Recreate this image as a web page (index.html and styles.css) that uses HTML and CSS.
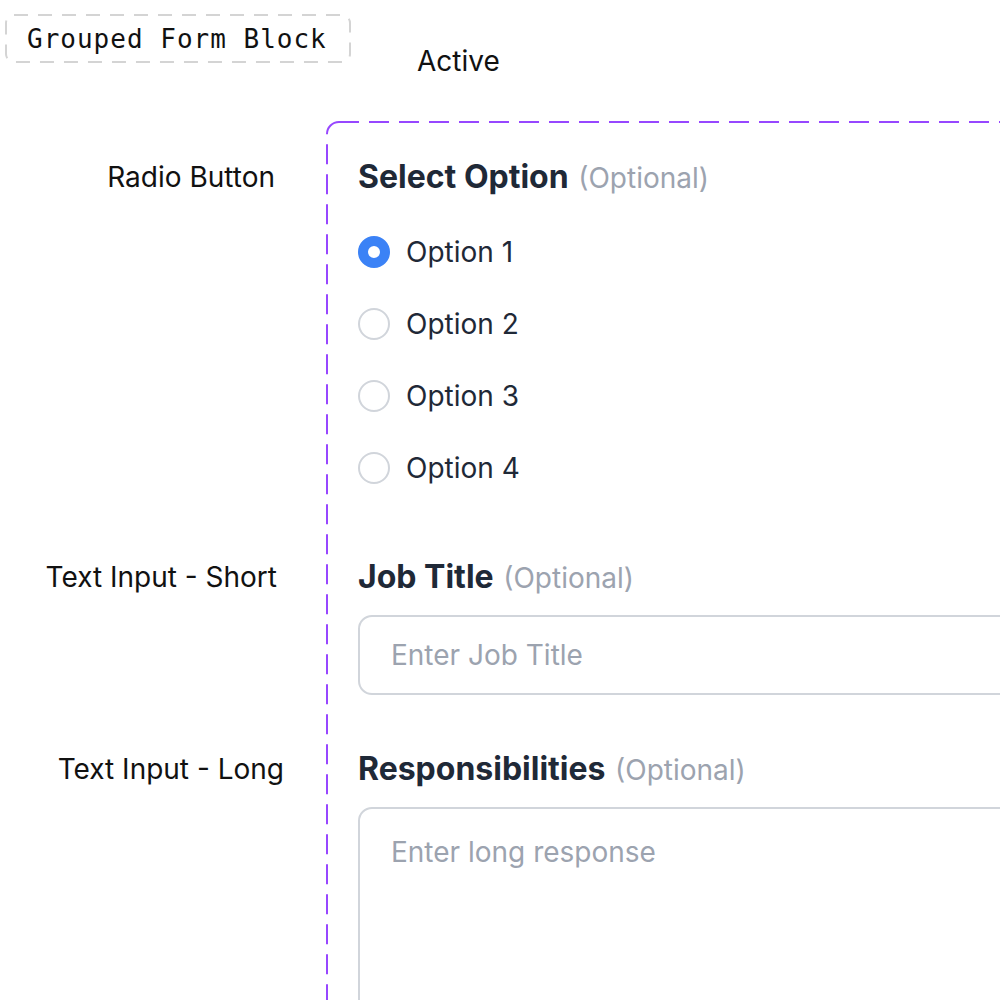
FILE: index.html
```html
<!DOCTYPE html>
<html lang="en">
<head>
    <meta charset="UTF-8">
    <meta name="viewport" content="width=device-width, initial-scale=1.0">
    <title>Grouped Form Block</title>
    <link rel="stylesheet" href="styles.css">
</head>
<body>
    <div class="page">
        <header class="header">
            <div class="tag">Grouped Form Block</div>
            <div class="state">Active</div>
        </header>

        <div class="form-grid">
            <div class="frame"></div>

            <!-- Radio group -->
            <div class="row-label row-first">Radio Button</div>
            <div class="field row-first">
                <h2 class="field-title">Select Option <span class="optional">(Optional)</span></h2>
                <div class="options">
                    <label class="option"><input type="radio" name="opt" checked> Option 1</label>
                    <label class="option"><input type="radio" name="opt"> Option 2</label>
                    <label class="option"><input type="radio" name="opt"> Option 3</label>
                    <label class="option"><input type="radio" name="opt"> Option 4</label>
                </div>
            </div>

            <!-- Short text -->
            <div class="row-label row-short label-short">Text Input - Short</div>
            <div class="field row-short">
                <h2 class="field-title">Job Title <span class="optional">(Optional)</span></h2>
                <input class="text-input" type="text" placeholder="Enter Job Title">
            </div>

            <!-- Long text -->
            <div class="row-label row-long label-long">Text Input - Long</div>
            <div class="field row-long">
                <h2 class="field-title">Responsibilities <span class="optional">(Optional)</span></h2>
                <textarea class="text-area" placeholder="Enter long response"></textarea>
            </div>
        </div>
    </div>
</body>
</html>
```

FILE: styles.css
```css
:root {
    --ink: #1f2937;
    --muted: #9ca3af;
    --line: #d1d5db;
    --blue: #3b82f6;
}

body {
    margin: 0;
    background: #ffffff;
    font-family: 'Inter', 'Noto Sans', sans-serif;
    color: #111111;
    overflow: hidden;
}

.page {
    width: 1200px;
}

/* Top bar */
.header {
    display: flex;
    align-items: flex-start;
    height: 121px;
    padding: 14px 0 0 5px;
    box-sizing: border-box;
}

.tag {
    width: 346px;
    height: 49px;
    box-sizing: border-box;
    padding-left: 22px;
    font-family: 'DejaVu Sans Mono', 'Liberation Mono', monospace;
    font-size: 26px;
    letter-spacing: 1px;
    line-height: 51px;
    color: #111111;
    background: url("data:image/svg+xml,%3Csvg xmlns='http://www.w3.org/2000/svg' width='346' height='49'%3E%3Crect x='1' y='1' width='344' height='47' rx='8' fill='none' stroke='%23d4d4d4' stroke-width='2' stroke-dasharray='14 10'/%3E%3C/svg%3E") no-repeat;
}

.state {
    margin: 31px 0 0 66px;
    font-size: 28px;
    line-height: 32px;
}

/* Form rows */
.form-grid {
    display: grid;
    grid-template-columns: 326px 1fr;
}

.frame {
    grid-column: 2;
    grid-row: 1 / 4;
    background: url("data:image/svg+xml,%3Csvg xmlns='http://www.w3.org/2000/svg' width='2000' height='2000'%3E%3Crect x='1' y='1' width='1990' height='1990' rx='12' fill='none' stroke='%239747ff' stroke-width='2' stroke-dasharray='20 10'/%3E%3C/svg%3E") no-repeat;
}

.row-first { grid-row: 1; padding-top: 38px; }
.row-short { grid-row: 2; padding-top: 75px; }
.row-long { grid-row: 3; padding-top: 56px; }

.row-label {
    grid-column: 1;
    padding-right: 51px;
    text-align: right;
    font-size: 28px;
    line-height: 36px;
}

.label-short {
    padding-right: 49px;
}

.label-long {
    padding-right: 42px;
}

.field {
    grid-column: 2;
    padding-left: 32px;
}

.field-title {
    margin: 0;
    font-size: 32px;
    font-weight: 700;
    line-height: 36px;
    color: var(--ink);
}

.optional {
    margin-left: 2px;
    font-size: 28px;
    font-weight: 400;
    color: var(--muted);
}

/* Radio list */
.options {
    display: flex;
    flex-direction: column;
    gap: 40px;
    margin-top: 40px;
}

.option {
    display: flex;
    align-items: center;
    gap: 16px;
    height: 32px;
    font-size: 28px;
    color: var(--ink);
}

.option input {
    appearance: none;
    -webkit-appearance: none;
    width: 32px;
    height: 32px;
    margin: 0;
    box-sizing: border-box;
    border: 2px solid var(--line);
    border-radius: 50%;
    background: #ffffff;
}

.option input:checked {
    border: 10px solid var(--blue);
}

/* Text inputs */
.text-input,
.text-area {
    display: block;
    width: 760px;
    box-sizing: border-box;
    border: 2px solid var(--line);
    border-radius: 14px;
    padding: 0 0 0 31px;
    font-family: 'Inter', 'Noto Sans', sans-serif;
    font-size: 28px;
    color: var(--ink);
    background: #ffffff;
    outline: none;
}

.text-input {
    height: 80px;
    margin-top: 19px;
}

.text-area {
    height: 260px;
    margin-top: 19px;
    padding-top: 25px;
    line-height: 36px;
    resize: none;
}

.text-input::placeholder,
.text-area::placeholder {
    color: var(--muted);
}
```
